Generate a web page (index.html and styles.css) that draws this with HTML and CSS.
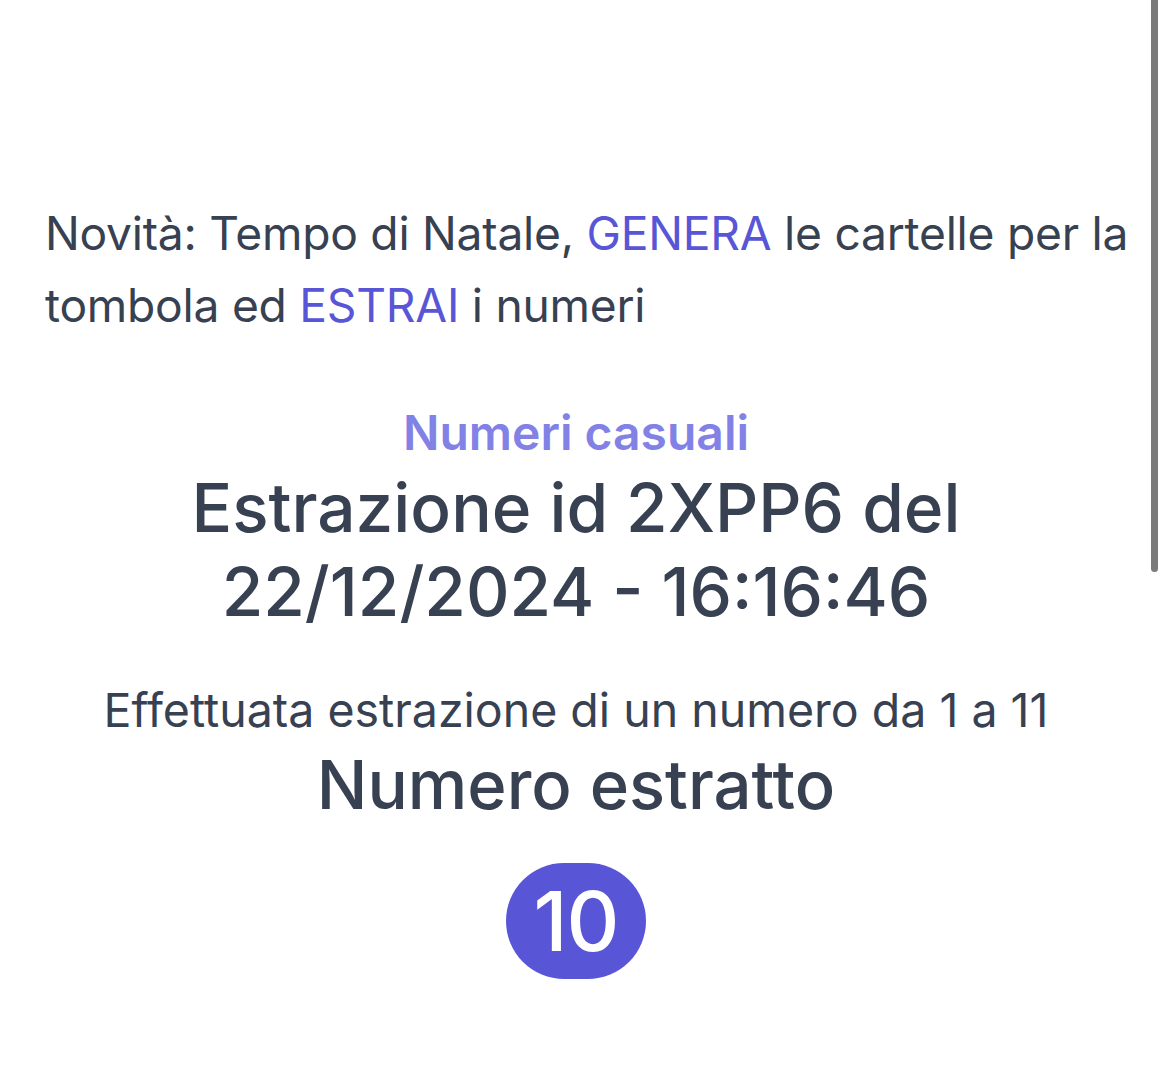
FILE: index.html
```html
<!DOCTYPE html>
<html lang="it">
<head>
<meta charset="utf-8">
<title>Numeri casuali</title>
<link rel="stylesheet" href="styles.css">
</head>
<body>
<main class="page">
  <p class="news">Novità: Tempo di Natale, <a class="link" href="#">GENERA</a> le cartelle per la tombola ed <a class="link" href="#">ESTRAI</a> i numeri</p>
  <section class="result">
    <div class="eyebrow">Numeri casuali</div>
    <h1 class="title">Estrazione id 2XPP6 del 22/12/2024 - 16:16:46</h1>
    <p class="desc">Effettuata estrazione di un numero da 1 a 11</p>
    <h2 class="subtitle">Numero estratto</h2>
    <div class="numbers">
      <span class="ball">10</span>
    </div>
  </section>
</main>
<div class="scrollbar"></div>
</body>
</html>
```

FILE: styles.css
```css
html, body {
  margin: 0;
  padding: 0;
  background: #ffffff;
}
body {
  font-family: Inter, "Noto Sans", "Liberation Sans", sans-serif;
  color: #374151;
  width: 1170px;
  height: 1082px;
  overflow: hidden;
}
.page {
  padding: 197px 18px 0 45px;
}
.news {
  margin: 0;
  font-size: 46.2px;
  line-height: 72px;
  letter-spacing: -0.25px;
}
.link {
  color: #5856d6;
  text-decoration: none;
}
.result {
  margin: 56px 45px 0 0;
  display: flex;
  flex-direction: column;
  align-items: center;
  text-align: center;
}
.eyebrow {
  font-size: 48px;
  line-height: 72px;
  font-weight: 600;
  color: #8282e6;
}
.title {
  margin: -3px 0 0;
  font-size: 67.5px;
  line-height: 84px;
  font-weight: 500;
  width: 820px;
}
.desc {
  margin: 40px 0 0;
  font-size: 46.5px;
  line-height: 72px;
}
.subtitle {
  margin: -3px 0 0;
  font-size: 67px;
  line-height: 84px;
  font-weight: 500;
}
.numbers {
  margin-top: 36px;
  display: flex;
  justify-content: center;
}
.ball {
  background: #5856d6;
  color: #ffffff;
  height: 116px;
  min-width: 140px;
  padding: 0 20px;
  box-sizing: border-box;
  border-radius: 58px;
  display: flex;
  align-items: center;
  justify-content: center;
  font-size: 82px;
  font-weight: 500;
  letter-spacing: -1px;
}
.scrollbar {
  position: fixed;
  top: 0;
  right: 12px;
  width: 7px;
  height: 572px;
  background: #7a7a7a;
  border-radius: 0 0 4px 4px;
}
```
